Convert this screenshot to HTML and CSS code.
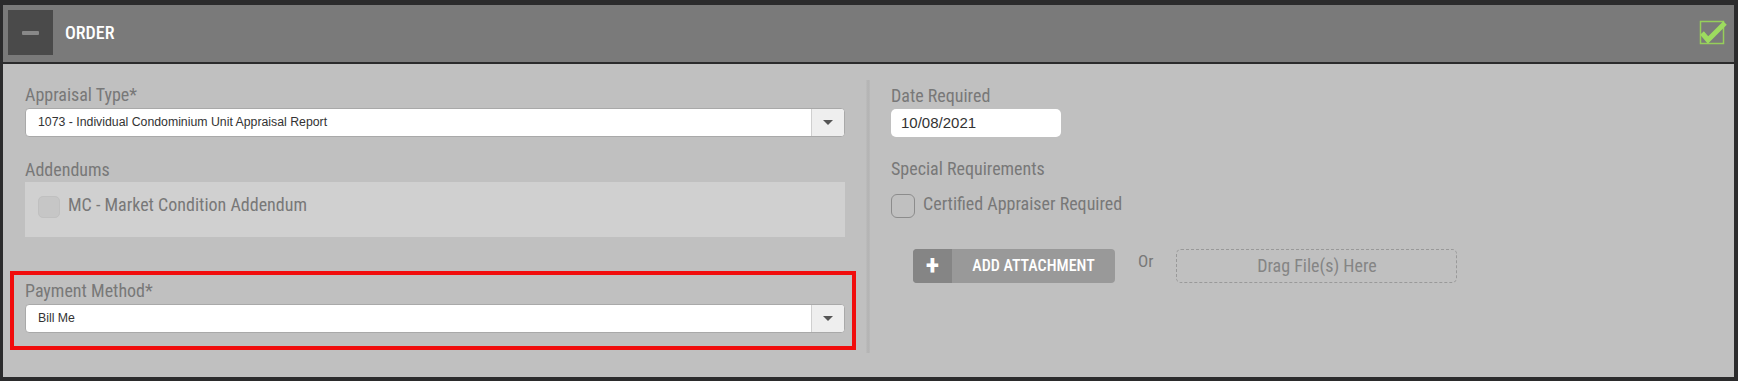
FILE: index.html
```html
<!DOCTYPE html>
<html>
<head>
	<title>Order</title>
	<meta charset="UTF-8">
	<link rel="stylesheet" href="styles.css">
</head>
<body>
	<div class="panel">
		<header class="panel-header">
			<button class="collapse"><span class="collapse-bar"></span></button>
			<h2 class="panel-title">ORDER</h2>
			<svg class="done-icon" width="30" height="26" viewBox="0 0 30 26">
				<rect x="2.5" y="2.5" width="23" height="22" fill="none" stroke="#96cf5a" stroke-width="1.5"/>
				<polyline points="4,14 10,21 27,4" fill="none" stroke="#9ddb5f" stroke-width="5"/>
			</svg>
		</header>

		<main class="panel-body">
			<div class="col col-left">
				<div class="field">
					<label class="field-label">Appraisal Type*</label>
					<div class="select">
						<span class="select-value">1073 - Individual Condominium Unit Appraisal Report</span>
						<span class="select-btn"><span class="caret"></span></span>
					</div>
				</div>

				<div class="field field-addenda">
					<label class="field-label">Addendums</label>
					<div class="addenda">
						<span class="check check-disabled"></span>
						<span class="check-text">MC - Market Condition Addendum</span>
					</div>
				</div>

				<div class="field highlight">
					<label class="field-label">Payment Method*</label>
					<div class="select">
						<span class="select-value">Bill Me</span>
						<span class="select-btn"><span class="caret"></span></span>
					</div>
				</div>
			</div>

			<div class="divider"></div>

			<div class="col col-right">
				<div class="field">
					<label class="field-label">Date Required</label>
					<div class="date-input">10/08/2021</div>
				</div>

				<div class="field field-special">
					<label class="field-label">Special Requirements</label>
					<div class="check-row">
						<span class="check"></span>
						<span class="check-text">Certified Appraiser Required</span>
					</div>
				</div>

				<div class="attach-row">
					<button class="attach-btn">
						<span class="attach-plus">+</span>
						<span class="attach-label">ADD ATTACHMENT</span>
					</button>
					<span class="attach-or">Or</span>
					<div class="drop-zone">Drag File(s) Here</div>
				</div>
			</div>
		</main>
	</div>
</body>
</html>
```

FILE: styles.css
```css
body {
	margin: 0;
	padding: 0;
	background-color: #2b2b2c;
	font-family: "Roboto Condensed", "DejaVu Sans Condensed", "Liberation Sans Narrow", Roboto, sans-serif;
}
.panel {
	margin: 5px 4px 4px 3px;
	height: 372px;
	display: flex;
	flex-direction: column;
}
.panel-header {
	height: 59px;
	box-sizing: border-box;
	background-color: #7a7a7a;
	border-bottom: 2px solid #2b2b2c;
	display: flex;
	align-items: center;
	padding: 0 6px 0 5px;
}
.collapse {
	width: 45px;
	height: 45px;
	border: none;
	padding: 0;
	background-color: #4a4a4a;
	display: flex;
	align-items: center;
	justify-content: center;
	margin-top: -2px;
}
.collapse-bar {
	display: block;
	width: 17px;
	height: 4px;
	border-radius: 1px;
	background-color: #888;
}
.panel-title {
	margin: -2px 0 0 12px;
	font-size: 18px;
	font-weight: 500;
	color: #fff;
}
.done-icon {
	margin-left: auto;
	margin-top: -3px;
}

.panel-body {
	flex: 1;
	background-color: #c0c0c0;
	display: flex;
	padding-left: 22px;
}
.col-left {
	width: 820px;
	padding-top: 21px;
}
.divider {
	width: 4px;
	margin: 16px 21px 24px 21px;
	background: linear-gradient(to right, #bdbdbd, #b3b3b3, #bababa);
}
.col-right {
	flex: 1;
	padding-top: 22px;
}

.field-label {
	display: block;
	font-size: 18px;
	line-height: 20px;
	color: #787878;
	margin-bottom: 3px;
}
.field-addenda {
	margin-top: 23px;
}
.field-addenda .field-label {
	margin-bottom: 2px;
}
.field-special {
	margin-top: 22px;
}

.select {
	display: flex;
	height: 29px;
	box-sizing: border-box;
	background-color: #fff;
	border: 1px solid #a9a9a9;
	border-radius: 4px;
	overflow: hidden;
}
.select-value {
	flex: 1;
	padding-left: 12px;
	font-family: "Liberation Sans", Arial, sans-serif;
	font-size: 12.3px;
	line-height: 27px;
	color: #333;
}
.select-btn {
	width: 32px;
	background-color: #eeeeee;
	border-left: 1px solid #cfcfcf;
	display: flex;
	align-items: center;
	justify-content: center;
}
.caret {
	width: 0;
	height: 0;
	border-left: 5px solid transparent;
	border-right: 5px solid transparent;
	border-top: 5px solid #555;
}

.addenda {
	height: 55px;
	background-color: #d0d0d0;
	display: flex;
	align-items: center;
	padding: 0 13px 6px;
	box-sizing: border-box;
}
.check {
	width: 24px;
	height: 24px;
	box-sizing: border-box;
	border: 1.5px solid #8c8c8c;
	border-radius: 6px;
	flex-shrink: 0;
}
.check-disabled {
	width: 22px;
	height: 22px;
	background-color: #c6c6c6;
	border: 1px solid #c0c0c0;
	border-radius: 5px;
}
.check-text {
	margin: 0 0 5px 8px;
	font-size: 18px;
	color: #787878;
}
.check-row {
	margin-top: 14px;
	display: flex;
	align-items: center;
}

.highlight {
	margin: 34px -11px 0 -15px;
	border: 4px solid #f10d0c;
	padding: 6px 7px 13px 11px;
}

.date-input {
	width: 170px;
	height: 28px;
	box-sizing: border-box;
	background-color: #fff;
	border-radius: 5px;
	padding-left: 10px;
	font-family: "Liberation Sans", Arial, sans-serif;
	font-size: 15px;
	line-height: 28px;
	color: #333;
}

.attach-row {
	margin-top: 30px;
	padding-left: 22px;
	display: flex;
	align-items: flex-start;
}
.attach-btn {
	width: 202px;
	height: 34px;
	padding: 0;
	border: none;
	border-radius: 4px;
	overflow: hidden;
	background-color: #999;
	display: flex;
	font-family: inherit;
}
.attach-plus {
	width: 39px;
	height: 34px;
	background-color: #858585;
	color: #fff;
	font-size: 28px;
	font-weight: 700;
	line-height: 33px;
	text-align: center;
}
.attach-label {
	flex: 1;
	color: #fff;
	font-size: 16px;
	font-weight: 500;
	line-height: 34px;
	text-align: center;
}
.attach-or {
	margin: 2px 23px 0 23px;
	font-size: 17px;
	color: #787878;
}
.drop-zone {
	width: 281px;
	height: 34px;
	box-sizing: border-box;
	border: 1px dashed #999;
	border-radius: 5px;
	text-align: center;
	font-size: 18px;
	line-height: 32px;
	color: #858585;
}
```
